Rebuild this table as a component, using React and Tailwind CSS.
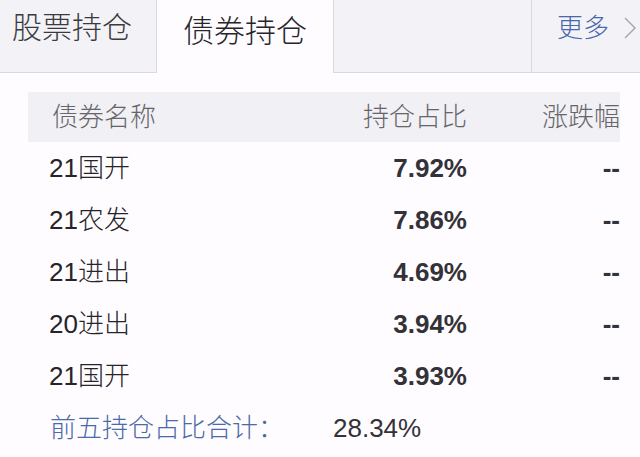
const rows = [
  { name: "21国开", ratio: "7.92%", change: "--" },
  { name: "21农发", ratio: "7.86%", change: "--" },
  { name: "21进出", ratio: "4.69%", change: "--" },
  { name: "20进出", ratio: "3.94%", change: "--" },
  { name: "21国开", ratio: "3.93%", change: "--" },
];

const font = { fontFamily: '"Liberation Sans", "Noto Sans CJK SC", sans-serif' };

const App = () => {
  return (
    <div className="w-[640px] h-[457px] bg-[#fefcfe] overflow-hidden font-light" style={font}>
      {/* tabs */}
      <div className="flex h-[73px]">
        <div className="w-[157px] shrink-0 bg-[#f3f2f7] border-r border-b border-[#d9d8de] pl-3 pt-[13px] text-[30px] leading-[30px] text-[#3a3a3f]">
          股票持仓
        </div>
        <div className="w-[176px] shrink-0 bg-[#fefcfe] pt-[16px] text-center text-[31px] leading-[31px] text-[#26252b]">
          债券持仓
        </div>
        <div className="w-[199px] shrink-0 bg-[#f3f2f7] border-l border-r border-b border-[#d9d8de]" />
        <div className="flex-1 bg-[#f3f2f7] border-b border-[#d9d8de] flex items-start pt-[15px] pl-[25px]">
          <span className="text-[26px] leading-[26px] text-[#4867ad]">更多</span>
          <svg width="14" height="24" viewBox="0 0 14 24" className="ml-[14px] mt-[1px]">
            <path d="M2 2 L12 12 L2 22" fill="none" stroke="#a3a3aa" strokeWidth="1.4" />
          </svg>
        </div>
      </div>

      {/* table */}
      <div className="ml-[28px] mr-[20px] mt-[19px]">
        <div className="flex h-[50px] items-center bg-[#f1f0f4] text-[26px] text-[#66656b]">
          <div className="w-[285px] pl-6">债券名称</div>
          <div className="w-[154px] text-right">持仓占比</div>
          <div className="flex-1 text-right">涨跌幅</div>
        </div>
        {rows.map((r, i) => (
          <div key={i} className="flex h-[52px] items-center text-[26px]">
            <div className="w-[285px] pl-[21px] text-[#25242a]">{r.name}</div>
            <div className="w-[154px] text-right font-bold text-[#333238]">{r.ratio}</div>
            <div className="flex-1 text-right font-bold text-[#333238]">{r.change}</div>
          </div>
        ))}
        <div className="flex h-[52px] items-center text-[26px]">
          <div className="w-[305px] pl-[22px] text-[#4a6aa8]">前五持仓占比合计：</div>
          <div className="text-[#333238]">28.34%</div>
        </div>
      </div>
    </div>
  );
};

export default App;
